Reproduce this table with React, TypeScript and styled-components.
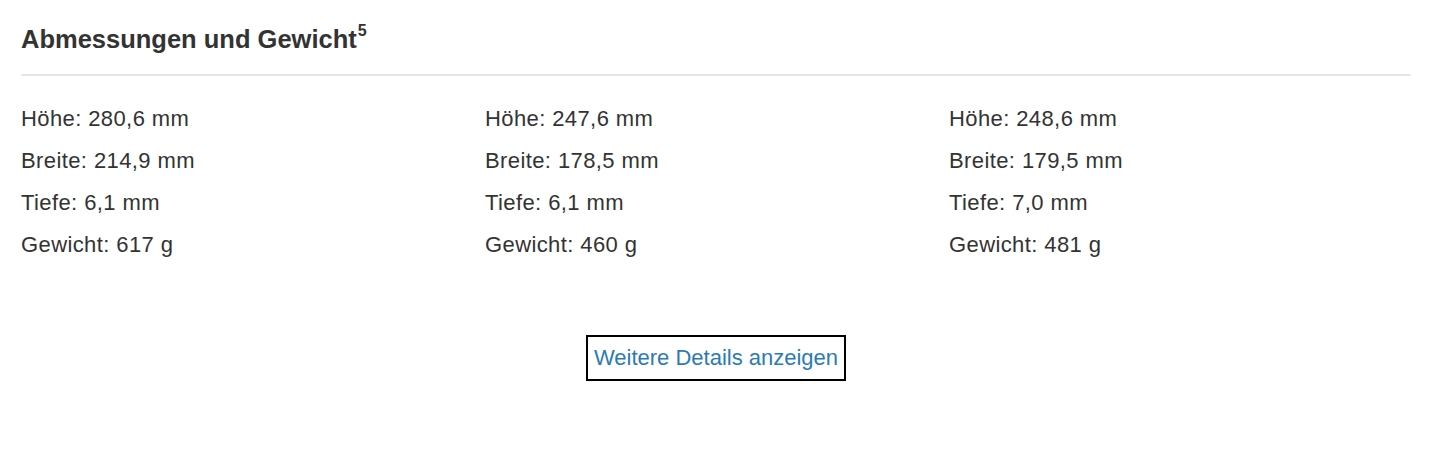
import React from 'react';
import styled, {createGlobalStyle} from 'styled-components';

const GlobalStyle = createGlobalStyle`
  body {
    margin: 0;
    background: #ffffff;
    font-family: "Liberation Sans", Arial, sans-serif;
    color: #333333;
  }
`

type TSpec = {
    height: string
    width: string
    depth: string
    weight: string
}

const specs: TSpec[] = [
    {height: '280,6 mm', width: '214,9 mm', depth: '6,1 mm', weight: '617 g'},
    {height: '247,6 mm', width: '178,5 mm', depth: '6,1 mm', weight: '460 g'},
    {height: '248,6 mm', width: '179,5 mm', depth: '7,0 mm', weight: '481 g'},
]

export default function App() {
    return (
        <>
            <GlobalStyle/>
            <Section>
                <Title>Abmessungen und Gewicht<sup>5</sup></Title>
                <Columns>
                    {specs.map((spec, i) => (
                        <SpecList key={i}>
                            <li>Höhe: {spec.height}</li>
                            <li>Breite: {spec.width}</li>
                            <li>Tiefe: {spec.depth}</li>
                            <li>Gewicht: {spec.weight}</li>
                        </SpecList>
                    ))}
                </Columns>
                <ButtonRow>
                    <DetailsButton>Weitere Details anzeigen</DetailsButton>
                </ButtonRow>
            </Section>
        </>
    );
}

const Section = styled.section`
  width: 1390px;
  margin-left: 21px;
  padding-top: 25px;
`

const Title = styled.h2`
  margin: 0;
  padding-bottom: 21px;
  border-bottom: 2px solid #e6e6e6;
  font-size: 25.5px;
  font-weight: 700;
  line-height: 28px;
  color: #333333;
  letter-spacing: 0;

  & sup {
    font-size: 16px;
    line-height: 0;
    position: relative;
    top: -3px;
    margin-left: 1px;
  }
`

const Columns = styled.div`
  display: grid;
  grid-template-columns: 464px 464px 1fr;
  padding-top: 22px;
`

const SpecList = styled.ul`
  list-style: none;
  margin: 0;
  padding: 0;

  & li {
    font-size: 22px;
    line-height: 42px;
    height: 42px;
    letter-spacing: 0.4px;
    color: #333333;
  }
`

const ButtonRow = styled.div`
  display: flex;
  justify-content: center;
  padding-top: 69px;
`

const DetailsButton = styled.button`
  background: #ffffff;
  border: 2px solid #000000;
  padding: 0 6px;
  height: 46px;
  font-family: "Liberation Sans", Arial, sans-serif;
  font-size: 22px;
  color: #2b7bb3;
  cursor: pointer;
`
